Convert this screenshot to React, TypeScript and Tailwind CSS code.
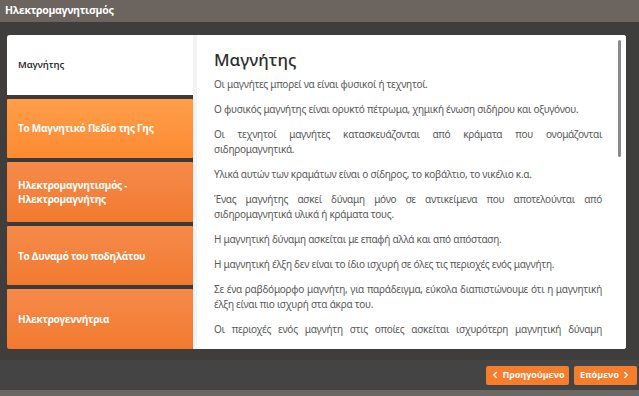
import { ChevronLeft, ChevronRight } from 'lucide-react'

// Μενού ενοτήτων
const topics = [
  'Μαγνήτης',
  'Το Μαγνητικό Πεδίο της Γης',
  'Ηλεκτρομαγνητισμός - Ηλεκτρομαγνήτης',
  'Το Δυναμό του ποδηλάτου',
  'Ηλεκτρογεννήτρια',
]

const paragraphs = [
  'Οι μαγνήτες μπορεί να είναι φυσικοί ή τεχνητοί.',
  'Ο φυσικός μαγνήτης είναι ορυκτό πέτρωμα, χημική ένωση σιδήρου και οξυγόνου.',
  'Οι τεχνητοί μαγνήτες κατασκευάζονται από κράματα που ονομάζονται σιδηρομαγνητικά.',
  'Υλικά αυτών των κραμάτων είναι ο σίδηρος, το κοβάλτιο, το νικέλιο κ.α.',
  'Ένας μαγνήτης ασκεί δύναμη μόνο σε αντικείμενα που αποτελούνται από σιδηρομαγνητικά υλικά ή κράματα τους.',
  'Η μαγνητική δύναμη ασκείται με επαφή αλλά και από απόσταση.',
  'Η μαγνητική έλξη δεν είναι το ίδιο ισχυρή σε όλες τις περιοχές ενός μαγνήτη.',
  'Σε ένα ραβδόμορφο μαγνήτη, για παράδειγμα, εύκολα διαπιστώνουμε ότι η μαγνητική έλξη είναι πιο ισχυρή στα άκρα του.',
  'Οι περιοχές ενός μαγνήτη στις οποίες ασκείται ισχυρότερη μαγνητική δύναμη ονομάζονται πόλοι του μαγνήτη.',
]

export default function App() {
  const active = 0

  return (
    <div className="w-[639px] h-[396px] flex flex-col bg-[#3f3e3d] font-['Open_Sans',sans-serif] overflow-hidden">
      {/* Κεφαλίδα */}
      <div className="h-[22px] shrink-0 bg-[#6b645f] flex items-center px-[5px]">
        <span className="text-white text-[10.5px] font-bold tracking-[-0.3px]">Ηλεκτρομαγνητισμός</span>
      </div>

      {/* Κύριο πλαίσιο */}
      <div className="flex-1 pt-[13px] px-[7px] pr-[13px]">
        <div className="h-[314px] flex rounded-[3px] overflow-hidden bg-white">
          <div className="w-[186px] shrink-0 flex flex-col gap-[4px] bg-[#3a3a3a]">
            {topics.map((t, i) => (
              <div
                key={t}
                className={
                  i === active
                    ? 'flex-1 flex items-center pl-[11px] pr-3 bg-white text-[#222] text-[9.5px] font-semibold tracking-[-0.1px]'
                    : i === 1
                    ? 'flex-1 flex items-center pl-[11px] pr-3 bg-gradient-to-b from-[#ff9e4a] to-[#fd8a30] text-white text-[10px] font-bold leading-[14px] tracking-[-0.25px] rounded-[1px]'
                    : 'flex-1 flex items-center pl-[11px] pr-3 bg-gradient-to-b from-[#f68a4a] to-[#f27a2e] text-white text-[10px] font-bold leading-[14px] tracking-[-0.25px] rounded-[1px]'
                }
              >
                {t}
              </div>
            ))}
          </div>

          {/* Περιεχόμενο */}
          <div className="relative flex-1 bg-white border-l-[4px] border-[#f3f3f3]">
            <div className="h-[305px] overflow-hidden pl-[17px] pr-[24px] pt-[13px] font-['Noto_Sans',sans-serif]">
              <h1 className="text-[17px] font-medium text-[#2e2e2e] leading-[24px] mb-[5px]">Μαγνήτης</h1>
              <div className="flex flex-col gap-[10px]">
                {paragraphs.map((p) => (
                  <p key={p} className="text-[10px] leading-[15px] tracking-[-0.25px] text-[#5a5a5a] text-justify">
                    {p}
                  </p>
                ))}
              </div>
            </div>
            <div className="absolute top-[5px] right-[5px] w-[3px] h-[117px] rounded-full bg-[#8a8a8a]" />
          </div>
        </div>
      </div>

      {/* Πλοήγηση */}
      <div className="h-[30px] shrink-0 bg-[#444444] flex items-center justify-end gap-[5px] pr-[2px] mt-[11px]">
        <button className="h-[19px] w-[83px] flex items-center justify-center gap-[2px] rounded-[2px] bg-[#f57d2c] text-white text-[9px] font-bold">
          <ChevronLeft size={10} strokeWidth={3.5} />
          Προηγούμενο
        </button>
        <button className="h-[19px] w-[63px] flex items-center justify-center gap-[2px] rounded-[2px] bg-[#f57d2c] text-white text-[9px] font-bold">
          Επόμενο
          <ChevronRight size={10} strokeWidth={3.5} />
        </button>
      </div>
      <div className="h-[6px] shrink-0 bg-[#6b6864]" />
    </div>
  )
}
